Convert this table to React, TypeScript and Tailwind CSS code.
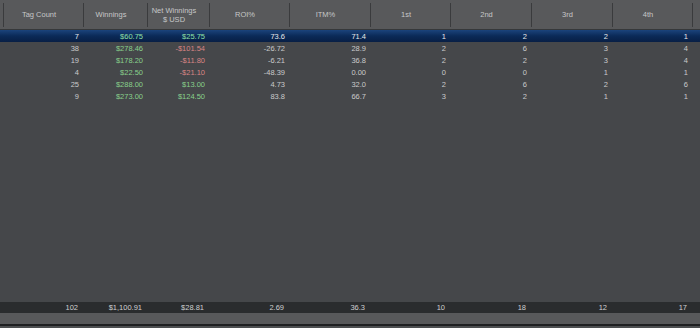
import React from "react";

type Row = {
  count: number;
  winnings: string;
  net: string;
  roi: string;
  itm: string;
  places: number[];
};

const rows: Row[] = [
  { count: 7, winnings: "$60.75", net: "$25.75", roi: "73.6", itm: "71.4", places: [1, 2, 2, 1] },
  { count: 38, winnings: "$278.46", net: "-$101.54", roi: "-26.72", itm: "28.9", places: [2, 6, 3, 4] },
  { count: 19, winnings: "$178.20", net: "-$11.80", roi: "-6.21", itm: "36.8", places: [2, 2, 3, 4] },
  { count: 4, winnings: "$22.50", net: "-$21.10", roi: "-48.39", itm: "0.00", places: [0, 0, 1, 1] },
  { count: 25, winnings: "$288.00", net: "$13.00", roi: "4.73", itm: "32.0", places: [2, 6, 2, 6] },
  { count: 9, winnings: "$273.00", net: "$124.50", roi: "83.8", itm: "66.7", places: [3, 2, 1, 1] },
];

const totals = ["102", "$1,100.91", "$28.81", "2.69", "36.3", "10", "18", "12", "17"];

// header columns, widths without the 1px divider
const headers: { label: React.ReactNode; w: string }[] = [
  { label: "Tag Count", w: "w-[79px]" },
  { label: "Winnings", w: "w-[63px]" },
  {
    label: (
      <>
        <span>Net Winnings</span>
        <span>$ USD</span>
      </>
    ),
    w: "w-[61px]",
  },
  { label: "ROI%", w: "w-[79px]" },
  { label: "ITM%", w: "w-[80px]" },
  { label: "1st", w: "w-[79px]" },
  { label: "2nd", w: "w-[80px]" },
  { label: "3rd", w: "w-[80px]" },
  { label: "4th", w: "w-[79px]" },
];

const grid = "grid grid-cols-[3px_80px_64px_62px_80px_81px_80px_81px_81px_80px_1fr]";

function Divider() {
  return <div className="w-px h-[24px] self-center bg-[#3a3b3d]" />;
}

function moneyColor(v: string) {
  return v.startsWith("-") ? "text-[#d98585]" : "text-[#88d08c]";
}

export default function App() {
  return (
    <div
      className="w-[700px] h-[328px] flex flex-col bg-[#45474a] overflow-hidden text-[7.5px] leading-[9px]"
      style={{ fontFamily: '"Liberation Sans", Arial, sans-serif' }}
    >
      {/* header */}
      <div className="h-[30px] flex bg-[#58595b] border-b border-[#36383a] text-[#c6c7c8] shrink-0">
        <div className="w-[3px]" />
        {headers.map((h, i) => (
          <React.Fragment key={i}>
            <Divider />
            <div className={`${h.w} flex flex-col items-center justify-center pr-[9px]`}>{h.label}</div>
          </React.Fragment>
        ))}
        <Divider />
      </div>

      {/* body */}
      <div className="flex-1">
        {rows.map((r, i) => {
          const sel = i === 0;
          return (
            <div
              key={i}
              className={`${grid} h-[12px] items-center ${
                sel
                  ? "bg-gradient-to-b from-[#1b447c] via-[#0b2a58] to-[#081f45] text-[#e6e8ea]"
                  : "text-[#c9cacb]"
              }`}
            >
              <div />
              <div className="text-right pr-1">{r.count}</div>
              <div className={`text-right pr-1 ${sel ? "text-[#8fe0a6]" : "text-[#88d08c]"}`}>{r.winnings}</div>
              <div className={`text-right pr-1 ${sel ? "text-[#8fe0a6]" : moneyColor(r.net)}`}>{r.net}</div>
              <div className="text-right pr-1">{r.roi}</div>
              <div className="text-right pr-1">{r.itm}</div>
              {r.places.map((p, j) => (
                <div key={j} className="text-right pr-1">
                  {p}
                </div>
              ))}
              <div />
            </div>
          );
        })}
      </div>

      {/* totals */}
      <div className={`${grid} h-[11px] items-center bg-[#2a2c2e] text-[#cfd0d1] shrink-0`}>
        <div />
        {totals.map((t, i) => (
          <div key={i} className="text-right pr-[5px]">
            {t}
          </div>
        ))}
        <div />
      </div>
      <div className="h-[11px] bg-[#58595b] shrink-0" />
      <div className="h-[2px] bg-[#1f2022] shrink-0" />
      <div className="h-[2px] bg-[#4d4f51] shrink-0" />
    </div>
  );
}
